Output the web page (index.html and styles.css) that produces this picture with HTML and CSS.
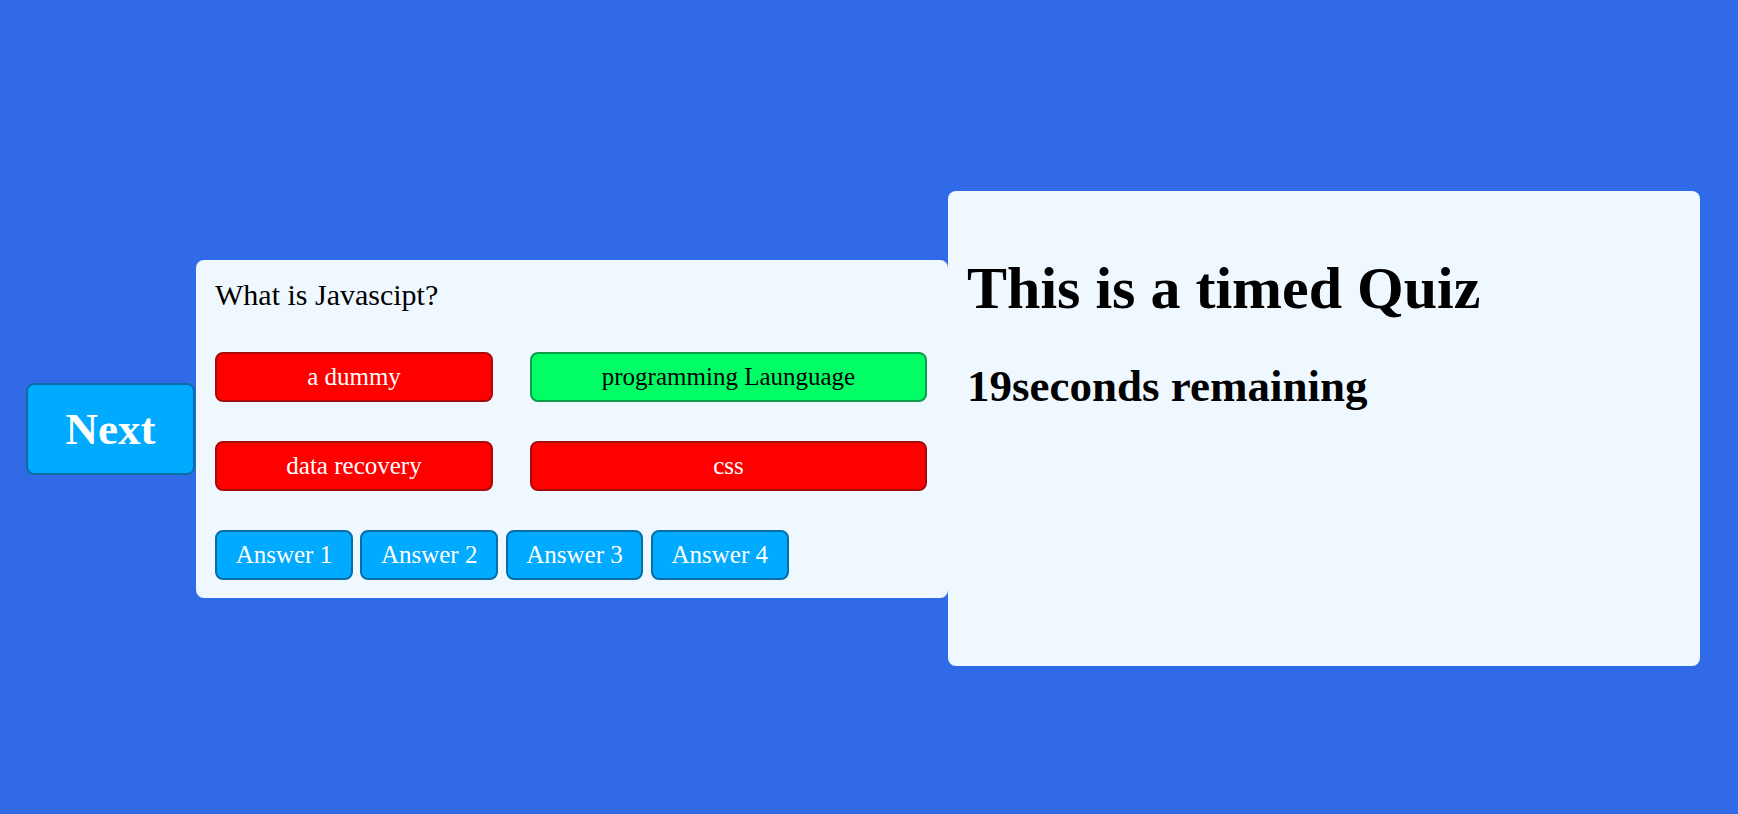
FILE: index.html
```html
<!DOCTYPE html>
<html lang="en">
<head>
<meta charset="utf-8">
<title>Timed Quiz</title>
<link rel="stylesheet" href="styles.css">
</head>
<body>
<main class="stage">
  <button class="next-btn">Next</button>
  <section class="quiz-card">
    <div class="question">What is Javascipt?</div>
    <div class="choices">
      <button class="choice wrong">a dummy</button>
      <button class="choice right">programming Launguage</button>
      <button class="choice wrong">data recovery</button>
      <button class="choice wrong">css</button>
    </div>
    <div class="answers">
      <button class="answer-btn">Answer 1</button>
      <button class="answer-btn">Answer 2</button>
      <button class="answer-btn">Answer 3</button>
      <button class="answer-btn">Answer 4</button>
    </div>
  </section>
  <section class="timer-card">
    <h1 class="timer-title">This is a timed Quiz</h1>
    <h2 class="timer-count">19seconds remaining</h2>
  </section>
</main>
</body>
</html>
```
FILE: styles.css
```css
html, body {
  margin: 0;
  padding: 0;
}
body {
  background: #306ae6;
  font-family: "Liberation Serif", "Times New Roman", serif;
  color: #000;
}
.stage {
  display: flex;
  align-items: center;
  padding: 191px 38px 0 26px;
}
button {
  font-family: "Liberation Serif", "Times New Roman", serif;
  cursor: pointer;
}
.next-btn {
  width: 169px;
  height: 92px;
  margin-right: 1px;
  flex: none;
  background: #00aaff;
  color: #fff;
  font-size: 45px;
  font-weight: bold;
  border: 2px solid #0a6ea6;
  border-radius: 8px;
  padding: 0;
}
.quiz-card {
  width: 752px;
  box-sizing: border-box;
  flex: none;
  background: #f0f8ff;
  border-radius: 8px;
  padding: 18px 21px 18px 19px;
}
.question {
  font-size: 30px;
  line-height: 34px;
}
.choices {
  display: grid;
  grid-template-columns: 278px 397px;
  column-gap: 37px;
  row-gap: 39px;
  margin-top: 40px;
}
.choice {
  height: 50px;
  font-size: 25px;
  border-radius: 8px;
  padding: 0;
}
.choice.wrong {
  background: #ff0000;
  color: #fff;
  border: 2px solid #a80a0a;
}
.choice.right {
  background: #00ff66;
  color: #000;
  border: 2px solid #0c9c4c;
}
.answers {
  display: flex;
  gap: 7.5px;
  margin-top: 39px;
}
.answer-btn {
  width: 137.8px;
  height: 50px;
  background: #00aaff;
  color: #fff;
  font-size: 25px;
  border: 2px solid #0a6ea6;
  border-radius: 8px;
  padding: 0;
}
.timer-card {
  width: 752px;
  height: 475px;
  box-sizing: border-box;
  flex: none;
  background: #f0f8ff;
  border-radius: 8px;
  padding: 19px 19px;
  overflow: hidden;
}
.timer-title {
  font-size: 60px;
  line-height: 66px;
  font-weight: bold;
  margin: 45px 0 40px;
}
.timer-count {
  font-size: 45px;
  line-height: 50px;
  font-weight: bold;
  margin: 37px 0;
}
```
